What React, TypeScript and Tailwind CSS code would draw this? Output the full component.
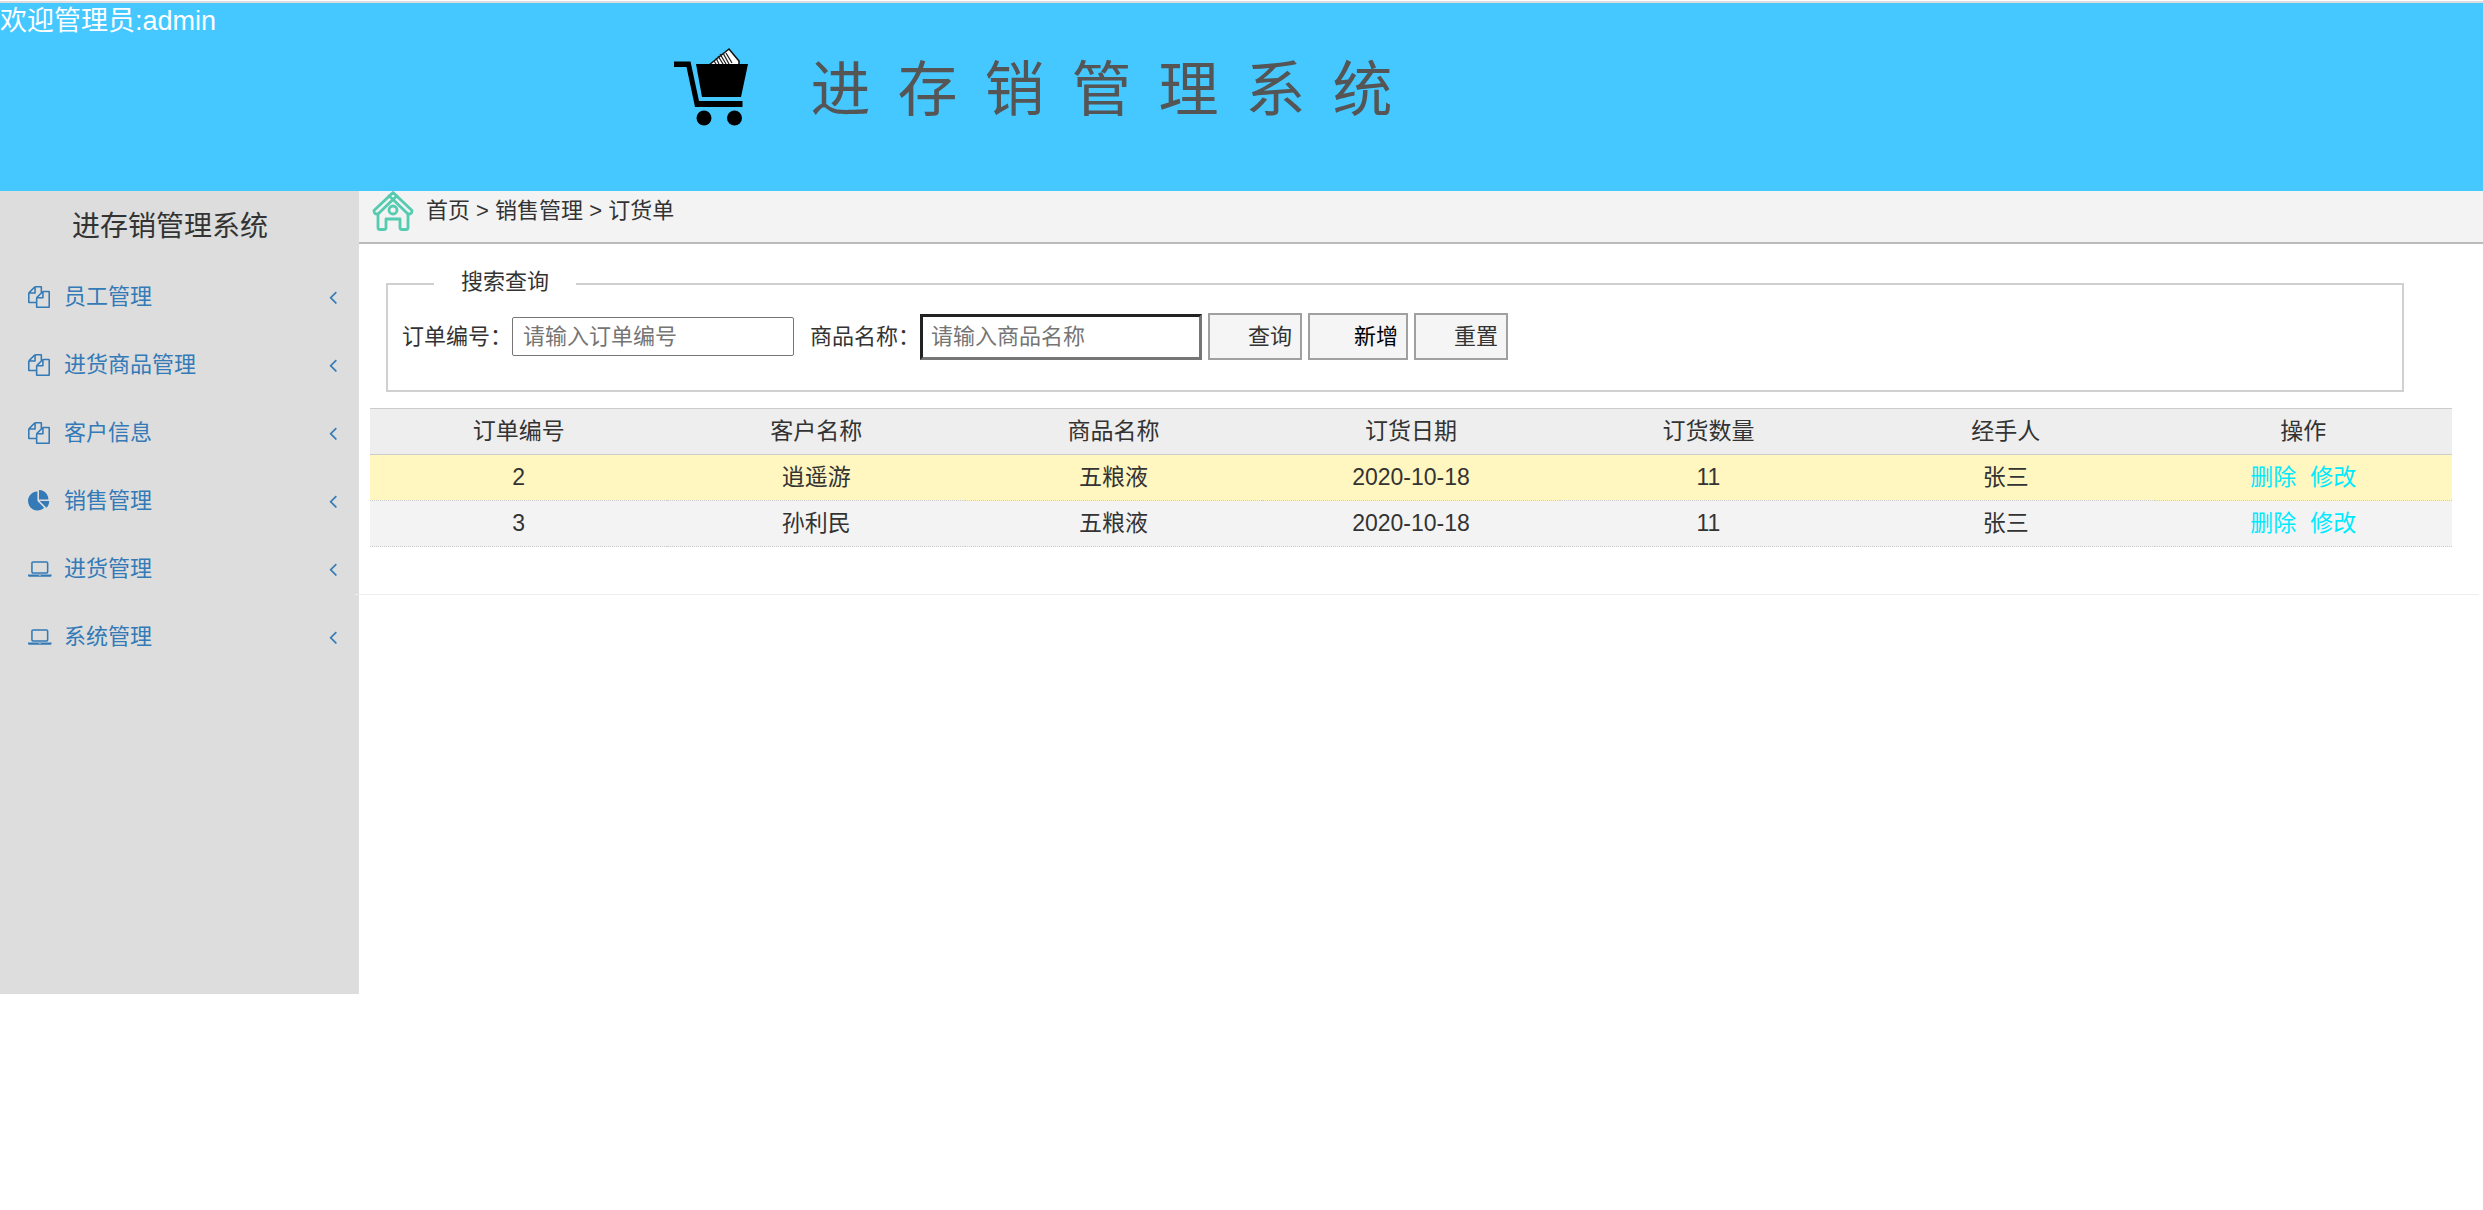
import * as React from "react"

const LINKS = [
    {name: "员工管理", icon: "files"},
    {name: "进货商品管理", icon: "files"},
    {name: "客户信息", icon: "files"},
    {name: "销售管理", icon: "pie"},
    {name: "进货管理", icon: "laptop"},
    {name: "系统管理", icon: "laptop"},
]

const COLUMNS = ["订单编号", "客户名称", "商品名称", "订货日期", "订货数量", "经手人", "操作"]

const ORDERS = [
    {id: 2, customer: "逍遥游", product: "五粮液", date: "2020-10-18", count: 11, handler: "张三"},
    {id: 3, customer: "孙利民", product: "五粮液", date: "2020-10-18", count: 11, handler: "张三"},
]

const ICON_PATHS: Record<string, string> = {
    files: "M1696 384q40 0 68 28t28 68v1216q0 40-28 68t-68 28h-960q-40 0-68-28t-28-68v-288h-544q-40 0-68-28t-28-68v-672q0-40 20-88t48-76l408-408q28-28 76-48t88-20h416q40 0 68 28t28 68v328q68-40 128-40h416zm-544 213l-299 299h299v-299zm-640-384l-299 299h299v-299zm196 647l316-316v-416h-384v416q0 40-28 68t-68 28h-416v640h512v-256q0-40 20-88t48-76zm956 804v-1152h-384v416q0 40-28 68t-68 28h-416v640h896z",
    pie: "M768 890l546 546q-106 108-247.5 168t-298.5 60q-209 0-385.5-103t-279.5-279.5-103-385.5 103-385.5 279.5-279.5 385.5-103v762zm187 6h773q0 157-60 298.5t-168 247.5zm709-128h-768v-768q209 0 385.5 103t279.5 279.5 103 385.5z",
    laptop: "M416 1280q-66 0-113-47t-47-113v-704q0-66 47-113t113-47h1088q66 0 113 47t47 113v704q0 66-47 113t-113 47h-1088zm-32-864v704q0 13 9.5 22.5t22.5 9.5h1088q13 0 22.5-9.5t9.5-22.5v-704q0-13-9.5-22.5t-22.5-9.5h-1088q-13 0-22.5 9.5t-9.5 22.5zm1376 928h160v96q0 40-47 68t-113 28h-1600q-66 0-113-28t-47-68v-96h1760zm-720 96q16 0 16-16t-16-16h-160q-16 0-16 16t16 16h160z",
}

function MenuIcon({name}: { name: string }) {
    return (
        <svg className="h-[22px] w-6" viewBox="0 0 1920 1792" preserveAspectRatio="xMinYMid meet" fill="currentColor" aria-hidden="true">
            <path d={ICON_PATHS[name]}/>
        </svg>
    );
}

function AngleLeft() {
    return (
        <svg className="size-[22px]" viewBox="0 0 1792 1792" fill="currentColor" aria-hidden="true">
            <path d="M1203 544q0 13-10 23l-393 393 393 393q10 10 10 23t-10 23l-50 50q-10 10-23 10t-23-10l-466-466q-10-10-10-23t10-23l466-466q10-10 23-10t23 10l50 50q10 10 10 23z"/>
        </svg>
    );
}

function CartLogo() {
    return (
        <svg className="h-20 w-[76px]" viewBox="0 0 76 80" aria-hidden="true">
            <path d="M35 18 55 2l10 12v5z" fill="#fff" stroke="#111" strokeWidth="1.600"/>
            <path d="m42 17-2-3m5 3-3-6m7 6-5-8m8 8-6-10m9 10-6-11m9 10-6-10" stroke="#222" strokeWidth="1.300"/>
            <path d="M22 17h52l-7 33H28z"/>
            <path d="M0 14.500v5.500h12.500l8.500 40h47.500v-6H25L16.500 14.500z"/>
            <circle cx="30" cy="71" r="7.500"/>
            <circle cx="60.500" cy="71" r="7.500"/>
        </svg>
    );
}

function HouseIcon() {
    return (
        <svg className="h-10 w-[42px]" viewBox="0 0 42 40" fill="none" stroke="#55cbb0" strokeWidth="2.800" strokeLinejoin="round" strokeLinecap="round" aria-hidden="true">
            <path d="M21 1.500 2 19.500q0 4 4 3.500v13.500q0 2 2 2h4q2 0 2-2V28h14v8.500q0 2 2 2h4q2 0 2-2V23q4 .5 4-3.500z"/>
            <path d="M6 23 21 8.500 36 23"/>
            <circle cx="21" cy="19" r="4"/>
            <path d="m17 5 4 3.500L25 5"/>
        </svg>
    );
}

function Header() {
    return (
        <header className="mt-px h-[190px] border-t-2 border-[#ddd] bg-[#44c8ff]">
            <p className="h-6 pt-[2px] text-[27px] leading-8 text-white">欢迎管理员:admin</p>
            <div className="ml-[27%] flex items-start gap-[60px] pt-5 pl-1">
                <CartLogo/>
                <h1 className="flex gap-[27px] pt-1 text-[60px] leading-[80px] text-[#555]">
                    {"进存销管理系统".split("").map((char) => <span key={char}>{char}</span>)}
                </h1>
            </div>
        </header>
    );
}

function Sidebar() {
    return (
        <aside className="h-[803px] w-[359px] shrink-0 bg-[#ddd]">
            <h2 className="pt-[14px] pl-[72px] text-[28px] leading-[44px]">进存销管理系统</h2>
            <nav className="pt-4">
                {LINKS.map((link) => (
                    <a key={link.name} href="#" className="mb-1 flex h-16 items-center pr-[15px] pl-7 text-[22px] text-[#337ab7] last:mb-0">
                        <MenuIcon name={link.icon}/>
                        <span className="ml-3 flex-1">{link.name}</span>
                        <AngleLeft/>
                    </a>
                ))}
            </nav>
        </aside>
    );
}

function SearchForm() {
    return (
        <fieldset className="mr-[79px] ml-[27px] h-[123px] border-2 border-[#d0d0d0] pt-[14px] pl-[14px]">
            <legend className="ml-8 px-[27px] pb-1 leading-[26px]">搜索查询</legend>
            <div className="flex items-center">
                <label htmlFor="orderNo">订单编号：</label>
                <input id="orderNo" type="text" placeholder="请输入订单编号"
                       className="h-[39px] w-[282px] rounded-xs border border-[#767676] px-[10px] placeholder:text-[#757575]"/>
                <label htmlFor="productName" className="ml-4">商品名称：</label>
                <input id="productName" type="text" placeholder="请输入商品名称"
                       className="h-[46px] w-[282px] border-3 border-t-[#222] border-r-[#767676] border-b-[#767676] border-l-[#222] px-2 placeholder:text-[#757575]"/>
                <div className="ml-[6px] flex gap-[6px]">
                    <button type="button" className="h-[47px] w-[94px] border-2 border-[#a0a0a0] bg-[#f5f5f5] pr-2 text-right">查询</button>
                    <button type="button" className="h-[47px] w-[100px] border-2 border-[#a0a0a0] bg-[#f5f5f5] pr-2 text-right text-black">新增</button>
                    <button type="button" className="h-[47px] w-[94px] border-2 border-[#a0a0a0] bg-[#f5f5f5] pr-2 text-right">重置</button>
                </div>
            </div>
        </fieldset>
    );
}

function OrderTable() {
    return (
        <table className="w-full table-fixed border-separate border-spacing-0 text-center text-[23px] leading-[45px]">
            <thead className="bg-[#eee]">
                <tr>
                    {COLUMNS.map((column) => (
                        <th key={column} className="border-y border-[#ccc] font-normal">{column}</th>
                    ))}
                </tr>
            </thead>
            <tbody className="[&_td]:border-b [&_td]:border-dotted [&_td]:border-[#ccc]">
                {ORDERS.map((order) => (
                    <tr key={order.id} className="bg-[#f3f3f3] first:bg-[#fff6c0]">
                        <td>{order.id}</td>
                        <td>{order.customer}</td>
                        <td>{order.product}</td>
                        <td>{order.date}</td>
                        <td>{order.count}</td>
                        <td>{order.handler}</td>
                        <td className="text-[#00eaff]">
                            <a href="#">删除</a>
                            <a href="#" className="ml-[14px]">修改</a>
                        </td>
                    </tr>
                ))}
            </tbody>
        </table>
    );
}

export default function App() {
    return (
        <div className="font-['Liberation_Sans','Noto_Sans_CJK_SC',sans-serif] text-[22px] leading-8 text-[#333]">
            <Header/>
            <div className="flex items-start">
                <Sidebar/>
                <main className="min-w-0 flex-1">
                    <div className="flex h-[53px] items-start border-b-2 border-[#bbb] bg-[#f3f3f3] pl-[13px]">
                        <HouseIcon/>
                        <p className="ml-3 pt-1">首页 &gt; 销售管理 &gt; 订货单</p>
                    </div>
                    <div className="pt-[25px]">
                        <SearchForm/>
                    </div>
                    <div className="mt-4 mr-[31px] ml-[11px]">
                        <OrderTable/>
                    </div>
                    <hr className="mt-[47px] mr-1 -ml-1 border-[#eee]"/>
                </main>
            </div>
        </div>
    );
}
